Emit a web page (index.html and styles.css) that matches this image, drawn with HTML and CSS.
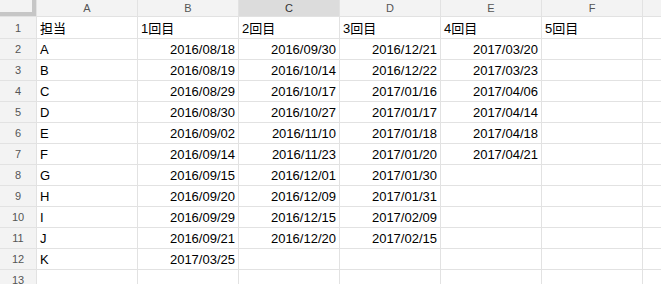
FILE: index.html
```html
<!DOCTYPE html>
<html lang="ja">
<head>
<meta charset="utf-8">
<link rel="stylesheet" href="styles.css">
</head>
<body>
<div class="sheet">
  <div class="corner"></div>
  <div class="colhead">A</div>
  <div class="colhead">B</div>
  <div class="colhead sel">C</div>
  <div class="colhead">D</div>
  <div class="colhead">E</div>
  <div class="colhead">F</div>
  <div class="colhead"></div>

  <div class="rowhead first">1</div>
  <div class="cell first">担当</div><div class="cell first">1回目</div><div class="cell first">2回目</div><div class="cell first">3回目</div><div class="cell first">4回目</div><div class="cell first">5回目</div><div class="cell first"></div>

  <div class="rowhead">2</div>
  <div class="cell">A</div><div class="cell num">2016/08/18</div><div class="cell num">2016/09/30</div><div class="cell num">2016/12/21</div><div class="cell num">2017/03/20</div><div class="cell"></div><div class="cell"></div>

  <div class="rowhead">3</div>
  <div class="cell">B</div><div class="cell num">2016/08/19</div><div class="cell num">2016/10/14</div><div class="cell num">2016/12/22</div><div class="cell num">2017/03/23</div><div class="cell"></div><div class="cell"></div>

  <div class="rowhead">4</div>
  <div class="cell">C</div><div class="cell num">2016/08/29</div><div class="cell num">2016/10/17</div><div class="cell num">2017/01/16</div><div class="cell num">2017/04/06</div><div class="cell"></div><div class="cell"></div>

  <div class="rowhead">5</div>
  <div class="cell">D</div><div class="cell num">2016/08/30</div><div class="cell num">2016/10/27</div><div class="cell num">2017/01/17</div><div class="cell num">2017/04/14</div><div class="cell"></div><div class="cell"></div>

  <div class="rowhead">6</div>
  <div class="cell">E</div><div class="cell num">2016/09/02</div><div class="cell num">2016/11/10</div><div class="cell num">2017/01/18</div><div class="cell num">2017/04/18</div><div class="cell"></div><div class="cell"></div>

  <div class="rowhead">7</div>
  <div class="cell">F</div><div class="cell num">2016/09/14</div><div class="cell num">2016/11/23</div><div class="cell num">2017/01/20</div><div class="cell num">2017/04/21</div><div class="cell"></div><div class="cell"></div>

  <div class="rowhead">8</div>
  <div class="cell">G</div><div class="cell num">2016/09/15</div><div class="cell num">2016/12/01</div><div class="cell num">2017/01/30</div><div class="cell"></div><div class="cell"></div><div class="cell"></div>

  <div class="rowhead">9</div>
  <div class="cell">H</div><div class="cell num">2016/09/20</div><div class="cell num">2016/12/09</div><div class="cell num">2017/01/31</div><div class="cell"></div><div class="cell"></div><div class="cell"></div>

  <div class="rowhead">10</div>
  <div class="cell">I</div><div class="cell num">2016/09/29</div><div class="cell num">2016/12/15</div><div class="cell num">2017/02/09</div><div class="cell"></div><div class="cell"></div><div class="cell"></div>

  <div class="rowhead">11</div>
  <div class="cell">J</div><div class="cell num">2016/09/21</div><div class="cell num">2016/12/20</div><div class="cell num">2017/02/15</div><div class="cell"></div><div class="cell"></div><div class="cell"></div>

  <div class="rowhead">12</div>
  <div class="cell">K</div><div class="cell num">2017/03/25</div><div class="cell"></div><div class="cell"></div><div class="cell"></div><div class="cell"></div><div class="cell"></div>

  <div class="rowhead">13</div>
  <div class="cell"></div><div class="cell"></div><div class="cell"></div><div class="cell"></div><div class="cell"></div><div class="cell"></div><div class="cell"></div>
</div>
</body>
</html>
```

FILE: styles.css
```css
html, body {
  margin: 0;
  padding: 0;
  background: #ffffff;
  overflow: hidden;
}

.sheet {
  display: grid;
  grid-template-columns: 36px repeat(7, 100px);
  grid-template-rows: 16px 21px repeat(12, 20px);
  gap: 1px;
  background: #e2e2e2;
  width: max-content;
  font-family: "Liberation Sans", Arial, "Noto Sans CJK JP", sans-serif;
}

.corner {
  background: #f3f3f3;
  box-sizing: border-box;
  border-right: 4px solid #c6c6c6;
  border-bottom: 4px solid #c6c6c6;
}

.colhead {
  background: #f3f3f3;
  color: #555555;
  font-size: 11px;
  display: flex;
  align-items: center;
  justify-content: center;
  line-height: 16px;
}

.colhead.sel {
  background: #dcdcdc;
  color: #333333;
}

.rowhead {
  background: #f3f3f3;
  color: #555555;
  font-size: 11px;
  display: flex;
  align-items: center;
  justify-content: center;
}

.cell {
  background: #ffffff;
  color: #000000;
  font-size: 13px;
  line-height: 16px;
  padding: 0 3px 1px 3px;
  display: flex;
  align-items: flex-end;
  white-space: nowrap;
  overflow: hidden;
}

.cell.first {
  font-family: "Liberation Sans", Arial, "Noto Sans CJK JP", sans-serif;
}

.num {
  justify-content: flex-end;
}
```
